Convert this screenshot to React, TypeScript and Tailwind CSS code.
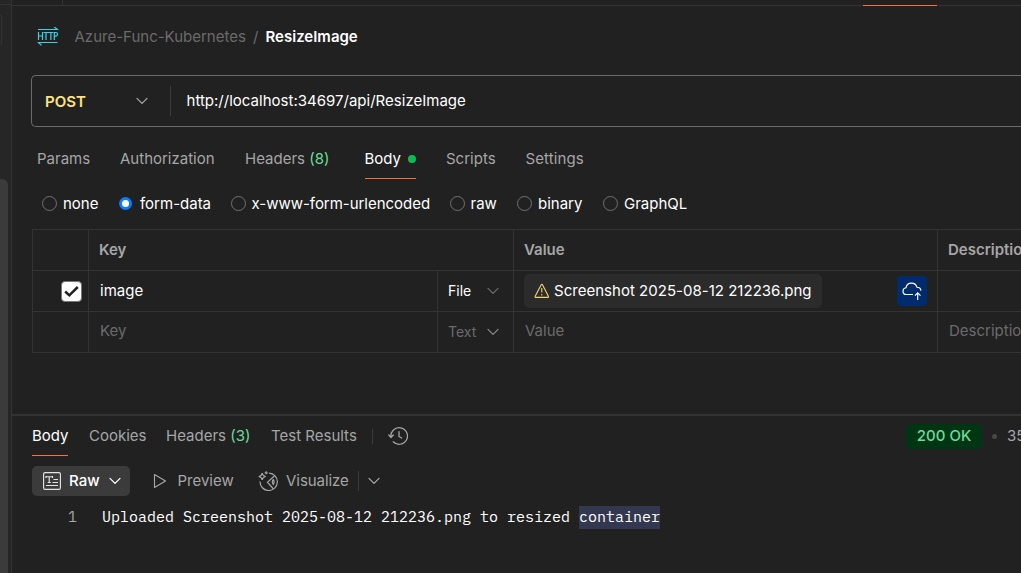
import React from "react";

const ui = "font-['Inter','Liberation_Sans',sans-serif]";

function Chevron({ className }: { className: string }) {
  return (
    <svg width="12" height="8" viewBox="0 0 12 8" fill="none" stroke="currentColor" strokeWidth="1.3" strokeLinecap="round" strokeLinejoin="round" className={"shrink-0 " + className}>
      <path d="M1 1.4 6 6.4 11 1.4" />
    </svg>
  );
}

function HttpIcon() {
  return (
    <svg width="22" height="20" viewBox="0 0 22 20" className="shrink-0" fill="none" stroke="#3fd0e2" strokeWidth="1.2">
      <path d="M1 2.500H20.500L16.800-.4M20.500 15.500H1.500L4.500 18.400" />
      <path d="M1.500 5V13M5.500 5V13M1.500 9H5.500M6.500 5.500H11.500M9 5.500V13M11.500 5.500H16.300M13.900 5.500V13M17.300 13V5.500H19Q20.500 5.500 20.500 7.300T19 9.200H17.300" />
    </svg>
  );
}

function WarningIcon() {
  return (
    <svg width="16" height="16" viewBox="0 0 16 16" className="shrink-0" fill="none" stroke="#f0d574" strokeWidth="1.1" strokeLinejoin="round">
      <path d="M7.200 1.700 1.200 13.200Q.8 14.400 2 14.400H13.600Q14.800 14.400 14.400 13.200L8.500 1.700Q7.800.8 7.200 1.700Z" />
      <path d="M7.800 5V9.600M7.800 11V12.500" />
    </svg>
  );
}

function CloudIcon() {
  return (
    <svg width="20" height="20" viewBox="0 0 20 20" fill="none" stroke="#fff" strokeWidth="1.150">
      <path d="M11 13.500H4.500C2.500 13.500 1 12 1 10.200 1 8.400 2.300 7 4 6.800 4.500 4 6.800 2.200 9.400 2.200 12 2.200 14.200 3.800 14.900 6.200 17.200 6.200 18.800 7.600 18.900 9.700M15.700 19V12M12.900 14.700 15.700 11.900 18.500 14.700" />
    </svg>
  );
}

function RawIcon() {
  return (
    <svg width="18" height="18" viewBox="0 0 18 18" className="shrink-0" fill="none" stroke="#e4e4e4" strokeWidth="1.150">
      <rect x=".6" y=".6" width="16.800" height="16.800" rx="1.500" />
      <path d="M3 4.700H9.500M6.200 4.700V10.500M4.700 10.500H7.800M3 4V6M9.500 4V6M10.500 7.500H15M9.500 10.500H15M3 13.500H15" />
    </svg>
  );
}

function VisualizeIcon() {
  return (
    <svg width="20" height="20" viewBox="0 0 20 20" className="shrink-0" fill="none" stroke="#a6a6a6" strokeWidth="1.200">
      <path d="M11 2.100A8.700 8.700 0 1 1 2 10.500M16.800 4.500 9.500 11.200 15 17.500M15.200 8.700Q17 11 15.200 13.400Q13.500 11 15.200 8.700Z" />
      <path d="M4.200 2Q4.500 5 7.700 5.500Q4.500 6 4.200 9Q3.800 6 .7 5.500Q3.800 5 4.200 2Z" />
      <path d="M8.200.3V3.300M6.700 1.800H9.700" />
    </svg>
  );
}

function HistoryIcon() {
  return (
    <svg width="20" height="20" viewBox="0 0 20 20" className="shrink-0" fill="none" stroke="#a6a6a6" strokeWidth="1.250" strokeLinecap="round" strokeLinejoin="round">
      <path d="M3 11.500A8.300 8.300 0 1 1 5.200 15.800M.8 9 3 11.500 5.300 9M11 5.500V10.500L13.700 12" />
    </svg>
  );
}

function Radio({ label, on, slot }: { label: string; on?: boolean; slot: string }) {
  return (
    <div className={"flex shrink-0 items-center " + slot}>
      {on ? (
        <span className="mr-2 ml-px flex size-[13px] items-center justify-center rounded-full bg-[#0a7cff]">
          <span className="size-[7px] rounded-full bg-white" />
        </span>
      ) : (
        <span className="mr-[6px] size-[15px] rounded-full border border-[#717171]" />
      )}
      <span className="whitespace-nowrap">{label}</span>
    </div>
  );
}

function TableRow({ children }: { children: React.ReactNode }) {
  return <div className="flex h-[41px] border-b border-[#333] *:shrink-0">{children}</div>;
}

export default function App() {
  return (
    <div className={"flex h-[573px] w-[1021px] overflow-hidden bg-[#212121] text-[15px] leading-5 text-[#a6a6a6] " + ui}>
      <aside className="flex w-3 shrink-0 flex-col border-r border-[#333] bg-[#262626]">
        <div className="h-[5px] border-b border-[#333]" />
        <div className="mt-[10px] h-[30px] w-[2px] rounded-r-sm border-y border-r border-[#333]" />
        <div className="mt-[134px] w-2 grow rounded-tr-md bg-[#3b3b3b]" />
      </aside>

      <main className="flex w-[1009px] shrink-0 flex-col overflow-hidden">
        <div className="flex h-[6px] shrink-0 items-end">
          <div className="h-full w-[51px] border-r border-b border-[#333]" />
          <div className="h-full w-[800px] border-b border-[#333]" />
          <div className="h-px w-[74px] bg-[#ec7048]" />
          <div className="h-px grow bg-[#333]" />
        </div>

        <div className="ml-[25px] flex h-[62px] shrink-0 items-center whitespace-nowrap">
          <HttpIcon />
          <span className="ml-[15.500px] w-[178.500px] text-[#6b6b6b]">Azure-Func-Kubernetes</span>
          <span className="w-[12.500px] text-[#6b6b6b]">/</span>
          <span className="font-semibold text-white">ResizeImage</span>
        </div>

        <div className="mt-[7px] ml-[19px] flex h-[52px] shrink-0 items-center rounded-l-[5px] border-y border-l border-[#6b6b6b]">
          <span className="ml-[13px] w-[91px] pt-px font-semibold text-[#ffe47e]">POST</span>
          <Chevron className="text-[#a6a6a6]" />
          <span className="ml-[22px] h-[30px] w-px bg-[#3b3b3b]" />
          <span className="ml-[15.500px] tracking-[0.010px] whitespace-nowrap text-white">http://localhost:34697/api/ResizeImage</span>
        </div>

        <nav className="ml-[25px] flex h-[52px] shrink-0 pt-[22px] whitespace-nowrap">
          <span className="w-[83px]">Params</span>
          <span className="w-[125px]">Authorization</span>
          <span className="w-[119.500px]">Headers <span className="text-[#6bdd9a]">(8)</span></span>
          <span className="mr-[30px] flex h-[30px] w-[51.500px] justify-between border-b border-[#ff6c37] text-white">
            Body<span className="mt-[6px] size-2 rounded-full bg-[#0cbb52]" />
          </span>
          <span className="w-[79.500px]">Scripts</span>
          <span className="tracking-[0.1px]">Settings</span>
        </nav>

        <div className="ml-[30px] flex h-[50px] shrink-0 items-center pb-px text-white">
          <Radio label="none" slot="w-[76px]" />
          <Radio label="form-data" on slot="w-[112.500px]" />
          <Radio label="x-www-form-urlencoded" slot="w-[219px] tracking-[-0.030px]" />
          <Radio label="raw" slot="w-[67.500px]" />
          <Radio label="binary" slot="w-[86px]" />
          <Radio label="GraphQL" slot="w-[90px]" />
        </div>

        <section className="ml-5 flex h-[124px] shrink-0 flex-col border-t border-l border-[#333]">
          <TableRow>
            <div className="w-14 border-r border-[#333]" />
            <div className="flex w-[425px] items-center border-r border-[#333] pl-[10px] font-semibold">Key</div>
            <div className="flex w-[424px] items-center border-r border-[#333] pl-[10px] font-semibold">Value</div>
            <div className="flex items-center pl-[10px] font-semibold">Description</div>
          </TableRow>
          <TableRow>
            <div className="flex w-14 items-center justify-end border-r border-[#333] pr-[6px]">
              <span className="flex size-[21px] items-center justify-center rounded-[4px] border border-[#777] bg-white">
                <svg width="17" height="17" viewBox="0 0 17 17" fill="none" stroke="#212121" strokeWidth="2.500"><path d="M2.200 8.500 6.300 12.300 14.800 4" /></svg>
              </span>
            </div>
            <div className="flex w-[349px] items-center border-r border-[#333] pl-[11px] text-white">image</div>
            <div className="flex w-[76px] items-center border-r border-[#333] pl-[10px] text-sm text-white">
              <span className="w-[39px]">File</span>
              <Chevron className="text-[#6b6b6b]" />
            </div>
            <div className="flex w-[424px] items-center justify-between border-r border-[#333] pr-[10px] pl-[10px]">
              <div className="flex h-[34px] w-[298px] items-center rounded-[5px] bg-[#2b2b2b] pl-[10px] whitespace-nowrap text-white">
                <WarningIcon />
                <span className="ml-1 tracking-[0.020px]">Screenshot 2025-08-12 212236.png</span>
              </div>
              <div className="flex size-[30px] items-center justify-center rounded-[4px] bg-[#002c6d]"><CloudIcon /></div>
            </div>
          </TableRow>
          <TableRow>
            <div className="w-14 border-r border-[#333]" />
            <div className="flex w-[349px] items-center border-r border-[#333] pb-[2px] pl-[11px] text-[#6b6b6b]">Key</div>
            <div className="flex w-[76px] items-center border-r border-[#333] pl-[10px] text-sm text-[#6b6b6b]">
              <span className="w-[39px]">Text</span>
              <Chevron className="text-[#858585]" />
            </div>
            <div className="flex w-[424px] items-center border-r border-[#333] pb-[2px] pl-[11px] text-[#6b6b6b]">Value</div>
            <div className="flex items-center pb-[2px] pl-[11px] text-[#6b6b6b]">Description</div>
          </TableRow>
        </section>

        <section className="mt-[61px] flex grow flex-col border-t-2 border-[#333]">
          <div className="ml-5 flex h-10 shrink-0 items-center whitespace-nowrap *:shrink-0">
            <span className="mr-[21px] h-full w-9 border-b border-[#ff6c37] pt-[10px] text-white">Body</span>
            <span className="w-[77px]">Cookies</span>
            <span className="w-[105px]">Headers <span className="text-[#6bdd9a]">(3)</span></span>
            <span className="w-[101px]">Test Results</span>
            <span className="mr-[15px] h-[15px] w-px bg-[#3b3b3b]" />
            <HistoryIcon />
            <span className="ml-[498px] flex h-[25px] w-[76px] items-center justify-center rounded-[5px] bg-[#003513] font-medium text-[#6bdd9a]">200 OK</span>
            <span className="mr-[10px] ml-[10px] size-[5px] rounded-full bg-[#484848]" />
            <span>35 ms</span>
          </div>

          <div className="mt-[10px] ml-5 flex h-[30px] shrink-0 items-center whitespace-nowrap">
            <div className="flex h-[30px] w-[98px] items-center rounded-[5px] bg-[#3b3b3b] pl-[11px] font-medium text-white">
              <RawIcon />
              <span className="ml-2 w-10">Raw</span>
              <Chevron className="text-white" />
            </div>
            <svg width="14" height="16" viewBox="0 0 14 16" fill="none" stroke="#a6a6a6" strokeWidth="1.150" strokeLinejoin="round" className="ml-[23px]"><path d="M1.500 1.500V14.500L12.500 8Z" /></svg>
            <span className="ml-[10.500px] w-[80.500px]">Preview</span>
            <VisualizeIcon />
            <span className="ml-2 w-[72px] tracking-[-0.050px]">Visualize</span>
            <span className="h-5 w-px bg-[#3b3b3b]" />
            <Chevron className="ml-[9px] text-[#a6a6a6]" />
          </div>

          <div className="mt-[10px] ml-14 flex h-[23px] shrink-0 items-center whitespace-pre font-['IBM_Plex_Mono','Liberation_Mono',monospace] text-white">
            <span className="w-[34px] pb-[2px] text-[#a6a6a6]">1</span>
            <span className="pb-[2px]">Uploaded Screenshot 2025-08-12 212236.png to resized </span>
            <span className="h-[23px] bg-[#343750] leading-[21px]">container</span>
          </div>
        </section>
      </main>
    </div>
  );
}
